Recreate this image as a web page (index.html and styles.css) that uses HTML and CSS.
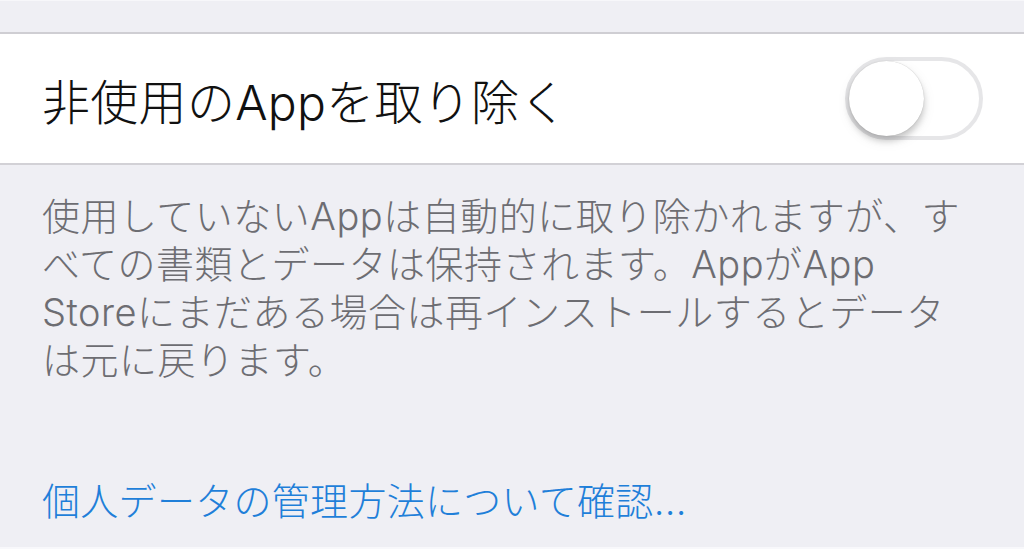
FILE: index.html
```html
<!DOCTYPE html>
<html lang="ja">
<head>
<meta charset="utf-8">
<title>非使用のAppを取り除く</title>
<link rel="stylesheet" href="styles.css">
</head>
<body>
<div class="screen">
  <div class="top-space"></div>
  <div class="cell">
    <span class="cell-title">非使用のAppを取り除く</span>
    <span class="switch"><span class="knob"></span></span>
  </div>
  <div class="footer">
    <p class="note">使用していないAppは自動的に取り除かれますが、す<br>べての書類とデータは保持されます。AppがApp<br>Storeにまだある場合は再インストールするとデータ<br>は元に戻ります。</p>
    <a class="link" href="#">個人データの管理方法について確認...</a>
  </div>
</div>
</body>
</html>
```

FILE: styles.css
```css
html, body {
  margin: 0;
  padding: 0;
}
body {
  background: #efeff4;
  font-family: Inter, "Noto Sans CJK JP", sans-serif;
  font-weight: 300;
  width: 1024px;
  height: 549px;
  overflow: hidden;
}
.screen {
  display: flex;
  flex-direction: column;
  height: 549px;
  border-bottom: 2px solid #f8f8fb;
  box-sizing: border-box;
}
.top-space {
  height: 32px;
  border-top: 1px solid #f7f7fa;
  box-sizing: border-box;
}
.cell {
  display: flex;
  align-items: center;
  justify-content: space-between;
  background: #fff;
  height: 133px;
  box-sizing: border-box;
  border-top: 2px solid #cfced3;
  border-bottom: 2px solid #d2d1d6;
  padding: 0 41px 0 42px;
}
.cell-title {
  font-size: 48px;
  color: #111;
  letter-spacing: 0.3px;
}
.switch {
  position: relative;
  width: 138px;
  height: 83px;
  border-radius: 42px;
  background: #fff;
  border: 4px solid #e6e6e8;
  box-sizing: border-box;
}
.knob {
  position: absolute;
  left: 0;
  top: 0;
  width: 75px;
  height: 75px;
  border-radius: 50%;
  background: #fff;
  box-shadow: 0 5px 6px rgba(0,0,0,0.18), 0 0 1px rgba(0,0,0,0.25), 0 5px 14px rgba(0,0,0,0.08);
}
.footer {
  display: flex;
  flex-direction: column;
  padding: 27px 42px 0 42px;
}
.note {
  margin: 0;
  font-size: 38px;
  line-height: 48px;
  letter-spacing: 0.5px;
  color: #6d6d72;
}
.link {
  margin-top: 93px;
  font-size: 38px;
  line-height: 48px;
  letter-spacing: 0.3px;
  color: #1f7fd9;
  text-decoration: none;
}
```
